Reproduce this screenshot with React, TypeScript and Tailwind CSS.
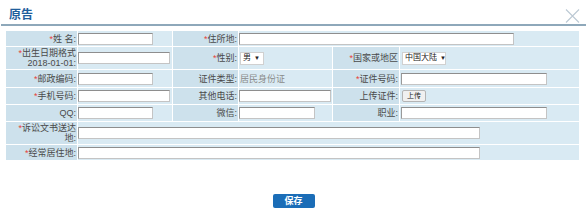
import React from "react";

const font = { fontFamily: '"Liberation Sans", "Noto Sans CJK SC", sans-serif' };

function Label({ children, req, className = "" }: { children: React.ReactNode; req?: boolean; className?: string }) {
  return (
    <div className={`flex items-center justify-end pr-[1px] bg-[#cde1ec] text-right text-[9px] leading-[10px] text-[#4a4a4a] whitespace-nowrap ${className}`}>
      <span>
        {req && <span className="text-[#e8403a]">*</span>}
        {children}
      </span>
    </div>
  );
}

function Value({ children, className = "" }: { children?: React.ReactNode; className?: string }) {
  return <div className={`flex items-center bg-[#d9eaf3] ${className}`}>{children}</div>;
}

function Input({ w }: { w: string }) {
  return (
    <div
      className={`${w} h-[12px] bg-white border border-[#c4c4c4] border-t-[#8e8e8e] border-l-[#9a9a9a]`}
    />
  );
}

function Select({ text, w }: { text: string; w: string }) {
  return (
    <div className={`${w} h-[13px] bg-white border border-[#d0d0d0] flex items-center px-[2px] gap-[3px] text-[8px] leading-[10px] text-[#222] whitespace-nowrap`}>
      <span>{text}</span>
      <span className="text-[6px]">▼</span>
    </div>
  );
}

export default function App() {
  return (
    <div className="w-[587px] h-[223px] bg-white relative" style={font}>
      <div className="h-[26px] border-b-2 border-[#8ea8ba] mx-[1px] flex">
        <div className="pl-[8px] pt-[8px] text-[12px] leading-[15px] font-bold text-[#1f5e9c]">原告</div>
      </div>
      <svg className="absolute left-[565px] top-[9px]" width="15" height="14" viewBox="0 0 15 14">
        <path d="M1 0.5 L14 13.5 M14 0.5 L1 13.5" stroke="#bcc9d4" strokeWidth="1.1" fill="none" />
      </svg>

      <div className="ml-[6px] mt-[5px] w-[575px] grid grid-cols-[71px_94px_65px_93px_66px_179px] grid-rows-[15px_22px_17px_16px_16px_22px_15px] gap-px bg-white">
        {/* row 1 */}
        <Label req>姓 名:</Label>
        <Value><Input w="w-[75px]" /></Value>
        <Label req>住所地:</Label>
        <Value className="col-span-3"><Input w="w-[275px]" /></Value>

        {/* row 2 */}
        <Label req>
          出生日期格式
          <br />
          2018-01-01:
        </Label>
        <Value><Input w="w-[92px]" /></Value>
        <Label req>性别:</Label>
        <Value className="pl-[1px]"><Select text="男" w="w-[24px]" /></Value>
        <Label req>国家或地区</Label>
        <Value className="pl-[2px]"><Select text="中国大陆" w="w-[44px]" /></Value>

        {/* row 3 */}
        <Label req>邮政编码:</Label>
        <Value><Input w="w-[75px]" /></Value>
        <Label>证件类型:</Label>
        <Value className="pl-[1px] text-[9px] leading-[10px] text-[#8a8a8a]">居民身份证</Value>
        <Label req>证件号码:</Label>
        <Value className="pl-[1px]"><Input w="w-[146px]" /></Value>

        {/* row 4 */}
        <Label req>手机号码:</Label>
        <Value><Input w="w-[92px]" /></Value>
        <Label>其他电话:</Label>
        <Value><Input w="w-[92px]" /></Value>
        <Label>上传证件:</Label>
        <Value className="pl-[2px]">
          <div className="w-[24px] h-[12px] bg-[#f0f0f0] border border-[#b4b4b4] rounded-[2px] flex items-center justify-center text-[7px] leading-[8px] text-[#222] whitespace-nowrap">
            上传
          </div>
        </Value>

        {/* row 5 */}
        <Label>QQ:</Label>
        <Value><Input w="w-[75px]" /></Value>
        <Label>微信:</Label>
        <Value><Input w="w-[76px]" /></Value>
        <Label>职业:</Label>
        <Value className="pl-[1px]"><Input w="w-[146px]" /></Value>

        {/* row 6 */}
        <Label req>
          诉讼文书送达
          <br />
          地:
        </Label>
        <Value className="col-span-5"><Input w="w-[402px]" /></Value>

        {/* row 7 */}
        <Label req>经常居住地:</Label>
        <Value className="col-span-5"><Input w="w-[402px]" /></Value>
      </div>

      <div className="flex justify-center mt-[34px]">
        <div className="w-[42px] h-[14px] bg-[#1b6db7] rounded-[2px] flex items-center justify-center text-white text-[9px] leading-[10px] font-bold">
          保存
        </div>
      </div>
    </div>
  );
}
